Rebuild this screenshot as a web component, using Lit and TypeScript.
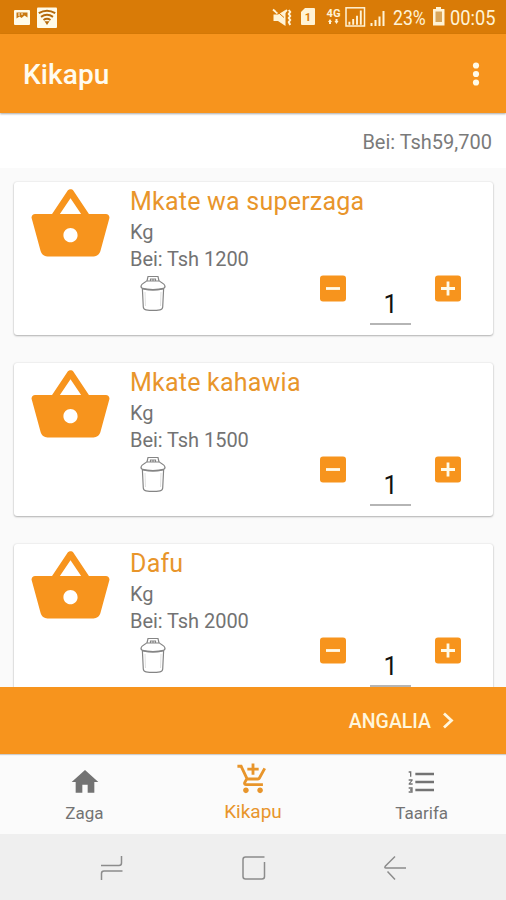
import { LitElement, html, css, svg } from "lit";
import { customElement, property } from "lit/decorators.js";

interface Item {
  name: string;
  unit: string;
  price: string;
  qty: number;
}

const ITEMS: Item[] = [
  { name: "Mkate wa superzaga", unit: "Kg", price: "1200", qty: 1 },
  { name: "Mkate kahawia", unit: "Kg", price: "1500", qty: 1 },
  { name: "Dafu", unit: "Kg", price: "2000", qty: 1 },
];

@customElement("cart-item")
export class CartItem extends LitElement {
  @property({ attribute: false }) item!: Item;

  static styles = css`
    :host {
      display: grid;
      grid-template-columns: 116px 1fr 173px;
      height: 153px;
      box-sizing: border-box;
      background: #fff;
      border-radius: 3px;
      box-shadow: 0 1px 2px rgba(0, 0, 0, 0.27), 0 0 2px rgba(0, 0, 0, 0.13);
      white-space: nowrap;
      color: #737373;
    }
    svg { display: block; }
    .basket { width: 85px; height: 85px; margin-left: 14px; fill: #f7941d; }
    .name { font-size: 25px; line-height: 30px; padding-top: 5px; color: #e8952b; letter-spacing: 0.22px; }
    .line { font-size: 20px; line-height: 27px; letter-spacing: -0.05px; }
    .unit { padding-top: 2px; }
    .trash { margin: 2px 0 0 9px; }
    .info { width: 0; }
    .stepper { grid-column: 3; display: flex; padding-top: 93px; }
    .qty {
      width: 41px;
      height: 48px;
      margin: 2px 24px 0 24px;
      border-bottom: 2px solid #b5b5b5;
      box-sizing: border-box;
      text-align: center;
      font-size: 25px;
      line-height: 56px;
      color: #111;
    }
  `;

  private button(plus: boolean) {
    return html`<svg width="26" height="27" viewBox="0 0 26 27">
      <rect y="0.5" width="26" height="26" rx="3" fill="#f7941d" />
      <path d=${plus ? "M6 13.5h14M13 6.5v14" : "M6 13.5h14"} stroke="#fffbe9" stroke-width="2.8" />
    </svg>`;
  }

  render() {
    const i = this.item;
    return html`
      <svg class="basket" viewBox="0 0 24 24">
        <path d="M17.21 9l-4.38-6.56c-.19-.28-.51-.42-.83-.42-.32 0-.64.14-.83.43L6.79 9H2c-.55 0-1 .45-1 1 0 .09.01.18.04.27l2.54 9.27c.23.84 1 1.46 1.92 1.46h13c.92 0 1.69-.62 1.93-1.46l2.54-9.27L23 10c0-.55-.45-1-1-1h-4.79zM9 9l3-4.4L15 9H9zm3 8c-1.1 0-2-.9-2-2s.9-2 2-2 2 .9 2 2-.9 2-2 2z" />
      </svg>
      <div class="info">
        <div class="name">${i.name}</div>
        <div class="line unit">${i.unit}</div>
        <div class="line">Bei: Tsh ${i.price}</div>
        <svg class="trash" width="28" height="37" viewBox="0 0 28 37" fill="none" stroke="#858585" stroke-width="1.2">
          <path d="M8 6 9 1.500h10L20 6M11.500 6V4h5v2M14 4v2" />
          <path d="M7.500 6h13c1 1.500 5 2 5.500 5 .2 1.500-1 2.500-3 3-5 1-13 1-18 0-2-.5-3.200-1.500-3-3C2.500 8 6.500 7.500 7.500 6z" />
          <path d="M3.500 13.600c5 1.600 16 1.600 21 0" stroke-width="1.600" />
          <path d="M3.400 14 4.300 32c.1 1.700 1 2.600 2.700 2.900 4.500.7 9.500.7 14 0 1.700-.3 2.600-1.200 2.700-2.900l.9-18" />
          <path d="M6 17l.5 14M22 17l-.5 14" stroke-width=".5" opacity=".5" />
        </svg>
      </div>
      <div class="stepper">
        ${this.button(false)}
        <div class="qty">${i.qty}</div>
        ${this.button(true)}
      </div>
    `;
  }
}

@customElement("app-root")
export class AppRoot extends LitElement {
  static styles = css`
    :host {
      display: flex;
      flex-direction: column;
      width: 506px;
      height: 900px;
      overflow: hidden;
      background: #fafafa;
      font-family: Roboto, "Liberation Sans", sans-serif;
      white-space: nowrap;
    }
    svg { display: block; flex: none; }
    .status { display: flex; height: 34px; flex: none; background: #d97b07; color: #fff3d6; }
    .gap { flex: 1; }
    .stat { font-size: 21px; line-height: 37px; transform-origin: left center; }
    .pct { width: 39px; transform: scaleX(0.84); }
    .clock { width: 56px; transform: scaleX(0.87); }
    .appbar {
      display: flex;
      align-items: center;
      justify-content: space-between;
      height: 79px;
      flex: none;
      padding: 0 26px 0 23px;
      background: #f7941d;
      color: #fffbee;
      box-shadow: 0 1px 2px rgba(0, 0, 0, 0.35);
      z-index: 1;
    }
    .title { font-size: 28px; font-weight: 500; letter-spacing: 0.1px; padding-top: 1px; }
    .total {
      height: 55px;
      flex: none;
      background: #fff;
      padding-right: 14px;
      text-align: right;
      font-size: 20px;
      line-height: 58px;
      color: #7a7a7a;
    }
    .list {
      flex: 1;
      min-height: 0;
      overflow: hidden;
      display: flex;
      flex-direction: column;
      gap: 28px;
      padding: 14px 13px 0 14px;
    }
    cart-item { flex: none; }
    .checkout {
      display: flex;
      align-items: center;
      justify-content: flex-end;
      height: 67px;
      flex: none;
      padding-right: 51px;
      box-sizing: border-box;
      background: #f7941d;
      color: #fff6dc;
      font-size: 19.5px;
      font-weight: 500;
      gap: 10px;
      box-shadow: 0 1px 1px rgba(0, 0, 0, 0.18);
      z-index: 1;
    }
    .checkout span { padding-top: 2px; }
    .tabs { display: grid; grid-template-columns: repeat(3, 1fr); height: 80px; flex: none; background: #fbfbfb; }
    .tab {
      display: flex;
      flex-direction: column;
      align-items: center;
      color: #737373;
      font-size: 17px;
      line-height: 20px;
      padding-top: 12px;
    }
    .tab svg { width: 32px; height: 32px; fill: currentColor; margin-left: 1px; }
    .tab span { padding-top: 5px; }
    .tab.active { color: #e8952b; font-size: 19px; padding-top: 8px; }
    .tab.active svg { width: 34px; height: 34px; margin-left: 1px; }
    .tab.active span { padding-top: 6px; }
    .system {
      display: flex;
      justify-content: space-between;
      align-items: center;
      height: 66px;
      flex: none;
      box-sizing: border-box;
      padding: 2px 99px 0;
      background: #efefef;
    }
  `;

  private bars() {
    return svg`<path d="M1 17v-3h2v3zM5 17v-6h2v6zM9 17V7.500h2V17zM13 17V2h2v15z" />`;
  }

  render() {
    return html`
      <div class="status">
        <svg width="80" height="34" viewBox="0 0 80 34">
          <rect x="14" y="10" width="16" height="15" rx="1" fill="#fffbe9" />
          <path d="M16.500 12.500h11v5l-3-2-3 2.500-2-1.500-3 2z" fill="#c97912" />
          <path d="M19 13v3M22 13v2" stroke="#fffbe9" stroke-width="1" />
          <rect x="37" y="7.500" width="20" height="20.500" rx="1" fill="#fffbe9" />
          <g fill="none" stroke="#b56a0c" stroke-width="2">
            <path d="M38.800 13.200Q47 8.200 55.200 13.200M41 16.800Q47 12.800 53 16.800M43.500 20Q47 17.600 50.500 20" />
          </g>
          <path d="M44.500 21.300h5L47 25z" fill="#b56a0c" />
        </svg>
        <div class="gap"></div>
        <svg width="123" height="34" viewBox="270 0 123 34" fill="#fff3d6">
          <path d="M273.500 14.500h4.500l7.500-4.500v16l-7.500-5h-4.500z" />
          <path d="M273 9.500l4.500 4M287 10l-4 4" stroke="#fff3d6" stroke-width="1.800" />
          <path d="M276 10.500l8 7" stroke="#d97b07" stroke-width="1" />
          <path d="M288.800 10l1.400 2-1.400 2 1.400 2-1.400 2 1.400 2-1.400 2 1.400 3" fill="none" stroke="#fff3d6" stroke-width="2" />
          <path d="M301 12l4-4h9q1 0 1 1v15q0 1-1 1h-12q-1 0-1-1z" />
          <text x="308" y="21" text-anchor="middle" font-size="11" font-weight="700" fill="#d97b07">1</text>
          <text x="326.500" y="17" font-size="10" font-weight="700" textLength="14" lengthAdjust="spacingAndGlyphs">4G</text>
          <path d="M328 22l2-3 2 3h-1v2h-2v-2zM334.500 21h1v-2h2v2h1l-2 3z" />
          <rect x="346" y="7.800" width="18.500" height="18.200" fill="none" stroke="#fff3d6" stroke-width="1.500" />
          <g transform="translate(347.500 8.500) scale(.95)">${this.bars()}</g>
          <g transform="translate(369.500 9)">${this.bars()}</g>
        </svg>
        <div class="stat pct">23%</div>
        <svg width="18" height="34" viewBox="432 0 18 34">
          <path d="M436 7h5v2h3q.5 0 .5.500V25.500h-11.500V9.500q0-.5.500-.5H436z" fill="#fff3d6" />
          <path d="M435.500 11.500h6.500V22h-6.500z" fill="#d9a65a" />
        </svg>
        <div class="stat clock">00:05</div>
      </div>
      <div class="appbar">
        <div class="title">Kikapu</div>
        <svg width="8" height="26" viewBox="0 0 8 26" fill="#fffbe9">
          <circle cx="4" cy="4.500" r="3.100" /><circle cx="4" cy="13" r="3.100" /><circle cx="4" cy="21.500" r="3.100" />
        </svg>
      </div>
      <div class="total">Bei: Tsh59,700</div>
      <div class="list">${ITEMS.map((i) => html`<cart-item .item=${i}></cart-item>`)}</div>
      <div class="checkout">
        <span>ANGALIA</span>
        <svg width="14" height="18" viewBox="0 0 14 18" fill="none" stroke="#fff6dc" stroke-width="2.800">
          <path d="M3 1.500l7.500 7L3 15.500" />
        </svg>
      </div>
      <div class="tabs">
        <div class="tab">
          <svg viewBox="0 0 24 24"><path d="M10 20v-6h4v6h5v-8h3L12 3 2 12h3v8z" /></svg>
          <span>Zaga</span>
        </div>
        <div class="tab active">
          <svg viewBox="0 0 24 24">
            <path d="M11 9h2V6h3V4h-3V1h-2v3H8v2h3v3zm-4 9c-1.100 0-1.990.9-1.990 2S5.900 22 7 22s2-.9 2-2-.9-2-2-2zm10 0c-1.100 0-1.990.9-1.990 2s.89 2 1.990 2 2-.9 2-2-.9-2-2-2zm-9.830-3.250l.03-.12.9-1.630h7.450c.75 0 1.410-.41 1.750-1.030l3.860-7.010L19.420 4h-.01l-1.100 2-2.760 5H8.530l-.13-.27L6.160 6l-.95-2-.94-2H1v2h2l3.600 7.590-1.350 2.450c-.16.28-.25.61-.25.96 0 1.100.9 2 2 2h12v-2H7.420c-.13 0-.25-.11-.25-.25z" />
          </svg>
          <span>Kikapu</span>
        </div>
        <div class="tab">
          <svg viewBox="0 0 24 24">
            <path d="M2 17h2v.5H3v1h1v.5H2v1h3v-4H2v1zm1-9h1V4H2v1h1v3zm-1 3h1.800L2 13.100v.9h3v-1H3.200L5 10.900V10H2v1zm5-6v2h14V5H7zm0 14h14v-2H7v2zm0-6h14v-2H7v2z" />
          </svg>
          <span>Taarifa</span>
        </div>
      </div>
      <div class="system">
        <svg width="25" height="26" viewBox="0 0 25 26" fill="none" stroke="#8c8c8c" stroke-width="1.500">
          <path d="M2 10.500h18q2.500 0 2.500-2.500V1M23.500 16H5q-2.500 0-2.500 2.500V25" />
        </svg>
        <svg width="26" height="26" viewBox="0 0 26 26" fill="none" stroke="#8c8c8c" stroke-width="1.500">
          <path d="M18 24H4.500Q2 24 2 21.500V4.500Q2 2 4.500 2H23.500M23.500 7V21.500Q23.500 24 21 24H8" />
        </svg>
        <svg width="24" height="26" viewBox="0 0 24 26" fill="none" stroke="#8c8c8c" stroke-width="1.500">
          <path d="M12 1.500 2.500 11Q1 13 3 13H23M4.500 16.500 12 24.500" />
        </svg>
      </div>
    `;
  }
}
